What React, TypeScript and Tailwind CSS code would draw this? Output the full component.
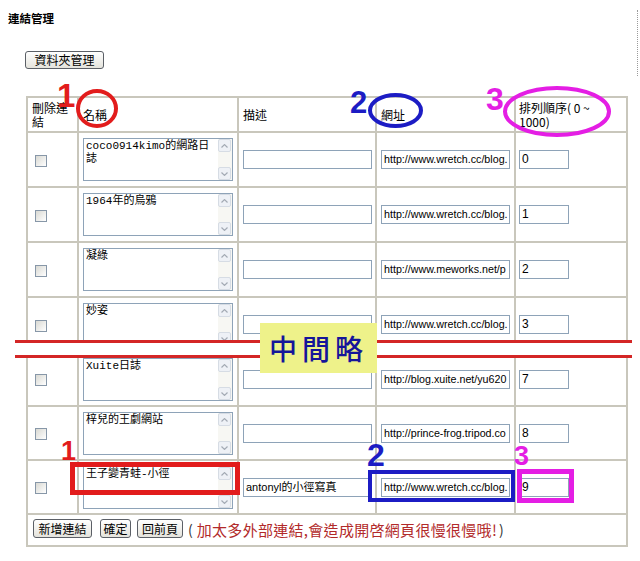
import React from "react";

type Row = { name: string; desc: string; url: string; order: string };

const rows: Row[] = [
  { name: "coco0914kimo的網路日誌", desc: "", url: "http://www.wretch.cc/blog.", order: "0" },
  { name: "1964年的烏鴉", desc: "", url: "http://www.wretch.cc/blog.", order: "1" },
  { name: "凝綠", desc: "", url: "http://www.meworks.net/p", order: "2" },
  { name: "妙姿", desc: "", url: "http://www.wretch.cc/blog.", order: "3" },
  { name: "Xuite日誌", desc: "", url: "http://blog.xuite.net/yu620", order: "7" },
  { name: "梓兒的王劇網站", desc: "", url: "http://prince-frog.tripod.co", order: "8" },
  { name: "王子變青蛙-小徑", desc: "antonyl的小徑寫真", url: "http://www.wretch.cc/blog.", order: "9" },
];

function Checkbox() {
  return <div className="h-[12px] w-[12px] border border-[#8797a8] bg-linear-to-br from-[#d9d9d3] to-white" />;
}

function Arrow({ up }: { up?: boolean }) {
  return (
    <div className="flex h-[13px] w-[13px] items-center justify-center rounded-[2px] border border-[#d6dce4] bg-[#eef1f6]">
      <svg width="7" height="4" viewBox="0 0 7 4">
        <path
          d={up ? "M0.5 3.5 L3.5 0.6 L6.5 3.5" : "M0.5 0.5 L3.5 3.4 L6.5 0.5"}
          fill="none"
          stroke="#a3aab4"
          strokeWidth="1.2"
        />
      </svg>
    </div>
  );
}

function FakeTextarea({ text }: { text: string }) {
  return (
    <div className="flex h-[43px] w-[150px] border border-[#8ea3b8] bg-white">
      <div className="flex-1 overflow-hidden pl-[2px] pt-[1px] font-['Liberation_Mono','Noto_Sans_CJK_TC',monospace] text-[11px] leading-[13px] text-black">
        {text}
      </div>
      <div className="flex w-[14px] flex-col justify-between bg-[#f7f7f3]">
        <Arrow up />
        <Arrow />
      </div>
    </div>
  );
}

function Field({ value, className }: { value: string; className: string }) {
  return (
    <div
      className={
        "h-[19px] overflow-hidden whitespace-nowrap border border-[#8ea3b8] bg-white pl-[2px] font-['Liberation_Sans','Noto_Sans_CJK_TC',sans-serif] leading-[17px] text-black " +
        className
      }
    >
      {value}
    </div>
  );
}

function Btn({ label, className }: { label: string; className: string }) {
  return (
    <div
      className={
        "flex items-center justify-center rounded-[3px] border border-[#5b5f66] bg-linear-to-b from-white to-[#e4e3dc] text-[12px] leading-[14px] text-black " +
        className
      }
    >
      {label}
    </div>
  );
}

export default function App() {
  const cell = "border-r-2 border-b-2 border-[#c9c7bc]";
  return (
    <div className="relative h-[561px] w-[640px] overflow-hidden bg-white pl-[8px] pt-[12px] font-['Noto_Sans_CJK_TC',sans-serif] text-black">
      <div className="h-[13px] text-[11.5px] font-bold leading-[13px]">連結管理</div>

      <div className="ml-[17px] mt-[26px]">
        <Btn label="資料夾管理" className="h-[18px] w-[79px]" />
      </div>

      <div className="ml-[18px] mt-[27px] grid w-[602px] grid-cols-[51px_160px_138px_139px_112px] grid-rows-[35px_55px_55px_55px_55px_54px_54px_54px_32px] border-l-2 border-t-2 border-[#c9c7bc]">
        <div className={`${cell} flex items-center px-[4px] text-[12px] leading-[14px]`}>刪除連結</div>
        <div className={`${cell} flex items-center px-[4px] text-[12px] leading-[14px]`}>名稱</div>
        <div className={`${cell} flex items-center px-[4px] text-[12px] leading-[14px]`}>描述</div>
        <div className={`${cell} flex items-center px-[4px] text-[12px] leading-[14px]`}>網址</div>
        <div className={`${cell} flex items-center pl-[3px] pr-[4px] text-[12px] leading-[14px]`}>排列順序( 0 ~ 1000)</div>

        {rows.map((r, i) => (
          <React.Fragment key={i}>
            <div className={`${cell} flex items-center pl-[7px] pt-[2px]`}>
              <Checkbox />
            </div>
            <div className={`${cell} pl-[4px] pt-[5px]`}>
              <FakeTextarea text={r.name} />
            </div>
            <div className={`${cell} flex items-center pl-[4px]`}>
              <Field value={r.desc} className="w-[129px] text-[11px]" />
            </div>
            <div className={`${cell} flex items-center pl-[4px]`}>
              <Field value={r.url} className="w-[129px] text-[10.7px]" />
            </div>
            <div className={`${cell} flex items-center pl-[3px]`}>
              <Field value={r.order} className="w-[50px] text-[12px]" />
            </div>
          </React.Fragment>
        ))}

        <div className={`${cell} col-span-5 flex items-start pl-[5px] pt-[4px]`}>
          <Btn label="新增連結" className="h-[19px] w-[59px]" />
          <Btn label="確定" className="ml-[8px] h-[19px] w-[31px]" />
          <Btn label="回前頁" className="ml-[6px] h-[19px] w-[46px]" />
          <div className="ml-[5px] flex h-[21px] items-center whitespace-nowrap">
            <span className="mr-[4px] text-[14px] text-[#333]">(</span>
            <span className="text-[15px] leading-[21px] tracking-[0.3px] text-[#b22a2a]">加太多外部連結,會造成開啓網頁很慢很慢哦!</span>
            <span className="ml-[2px] text-[14px] text-[#333]">)</span>
          </div>
        </div>
      </div>

      {/* dotted guide at right edge */}
      <div className="absolute left-[637px] top-[10px] h-[66px] border-l border-dotted border-[#9a9a9a]" />

      {/* "omitted" band */}
      <div className="absolute left-[15px] top-[340px] h-[18px] w-[617px] border-y-[3px] border-[#d42626] bg-white" />
      <div className="absolute left-[260px] top-[323px] flex h-[50px] w-[117px] items-center justify-center bg-[#eef28a] font-['Noto_Sans_CJK_TC',serif] text-[28px] font-medium leading-none tracking-[5px] text-[#15159a]">
        中間略
      </div>

      {/* annotation shapes */}
      <svg className="pointer-events-none absolute left-0 top-0" width="640" height="561" viewBox="0 0 640 561">
        <ellipse cx="97" cy="108.5" rx="19" ry="17.5" fill="none" stroke="#e21c1c" strokeWidth="4" />
        <ellipse cx="395.5" cy="110.5" rx="25.5" ry="15.5" fill="none" stroke="#1c1cc4" strokeWidth="4" />
        <ellipse cx="557" cy="111.5" rx="52" ry="23.5" fill="none" stroke="#e41ee4" strokeWidth="4" />
        <rect x="72.5" y="464.5" width="165" height="28" fill="none" stroke="#e21c1c" strokeWidth="5" />
        <rect x="370" y="472" width="143" height="28" fill="none" stroke="#1c1cc4" strokeWidth="4" />
        <rect x="519.5" y="471.5" width="52" height="29" fill="none" stroke="#e41ee4" strokeWidth="5" />
      </svg>

      {/* annotation numbers */}
      <div className="absolute left-[57px] top-[79px] font-['Liberation_Sans',sans-serif] text-[33px] font-bold leading-none text-[#e21c1c]">1</div>
      <div className="absolute left-[350px] top-[87px] font-['Liberation_Sans',sans-serif] text-[31px] font-bold leading-none text-[#1c1cc4]">2</div>
      <div className="absolute left-[486px] top-[83px] font-['Liberation_Sans',sans-serif] text-[32px] font-bold leading-none text-[#e41ee4]">3</div>
      <div className="absolute left-[61px] top-[438px] font-['Liberation_Sans',sans-serif] text-[27px] font-bold leading-none text-[#e21c1c]">1</div>
      <div className="absolute left-[367px] top-[439px] font-['Liberation_Sans',sans-serif] text-[32px] font-bold leading-none text-[#1c1cc4]">2</div>
      <div className="absolute left-[514px] top-[443px] font-['Liberation_Sans',sans-serif] text-[27px] font-bold leading-none text-[#e41ee4]">3</div>
    </div>
  );
}
